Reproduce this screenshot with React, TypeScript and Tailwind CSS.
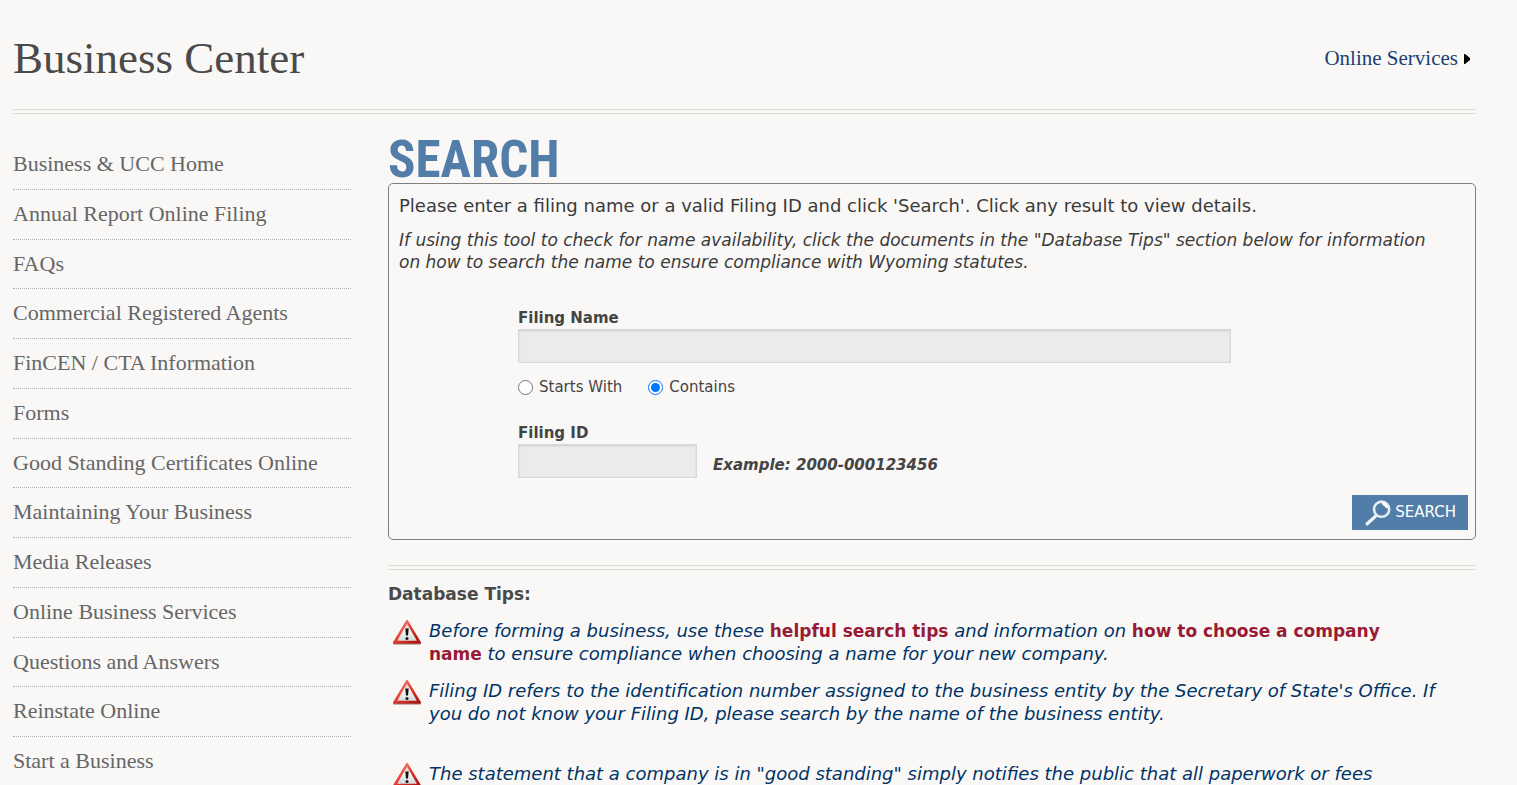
import { useState } from "react";

const menuItems = [
  "Business & UCC Home",
  "Annual Report Online Filing",
  "FAQs",
  "Commercial Registered Agents",
  "FinCEN / CTA Information",
  "Forms",
  "Good Standing Certificates Online",
  "Maintaining Your Business",
  "Media Releases",
  "Online Business Services",
  "Questions and Answers",
  "Reinstate Online",
  "Start a Business",
];

function WarningIcon() {
  return (
    <svg viewBox="0 0 30 26" className="h-[26px] w-[30px] shrink-0" aria-hidden="true">
      <defs>
        <linearGradient id="warnRed" x1="0" y1="0" x2="1" y2="1">
          <stop offset="0" stopColor="#f3a49c" />
          <stop offset="0.5" stopColor="#e2382c" />
          <stop offset="1" stopColor="#a80f0f" />
        </linearGradient>
        <linearGradient id="warnFace" x1="0" y1="0" x2="0" y2="1">
          <stop offset="0" stopColor="#f6b9b4" />
          <stop offset="0.4" stopColor="#f4f4f4" />
          <stop offset="1" stopColor="#d3dbdb" />
        </linearGradient>
      </defs>
      <path
        d="M15 1.6 28.2 23.8H1.8Z"
        fill="url(#warnRed)"
        stroke="url(#warnRed)"
        strokeWidth="1.8"
        strokeLinejoin="round"
      />
      <path d="M1.4 24.9H28.6" stroke="#8f4444" strokeWidth="1" />
      <path d="M15 4.6 24.8 21.8H5.2Z" fill="url(#warnFace)" />
      <path d="M13.3 9.4h3.4l-.7 7.2h-2Z" fill="#111" />
      <circle cx="15" cy="19.4" r="1.5" fill="#111" />
    </svg>
  );
}

function MagnifierIcon() {
  return (
    <svg viewBox="0 0 26 26" className="h-[26px] w-[26px]" fill="none" aria-hidden="true">
      <path d="M2.2 23.8 11.4 15.4" stroke="#f2f6fa" strokeWidth="3.2" strokeLinecap="round" />
      <circle cx="16.6" cy="9.2" r="7.6" stroke="#e4ecf3" strokeWidth="2.6" />
      <path d="M16.5 2.2c3.8.2 6.2 2.6 6.6 6-1.8.2-3-.6-3.4-2-1.4-.2-2.6-1.8-3.2-4Z" fill="#fff" />
    </svg>
  );
}

function Divider() {
  return <div className="h-[5px] border-y border-[#dddcd8]" />;
}

function Tip({ children }) {
  return (
    <li className="flex gap-[7px] pl-1 last:pt-[23px]">
      <WarningIcon />
      <p className="max-w-[1009px] text-[18px] leading-[23px] text-[#003366] italic">{children}</p>
    </li>
  );
}

function TipLink({ children }) {
  return (
    <a href="#" className="text-[17px] leading-none font-bold text-[#981b35] not-italic">
      {children}
    </a>
  );
}

const inputClass =
  "h-[34px] rounded-none border border-[#d8d8d6] bg-[#ebebeb] px-2 text-[15px] shadow-[inset_0_1px_2px_rgba(0,0,0,0.12)] outline-none";

function SearchForm() {
  const [name, setName] = useState("");
  const [filingId, setFilingId] = useState("");
  const [match, setMatch] = useState("contains");

  return (
    <form
      onSubmit={(event) => event.preventDefault()}
      className="rounded-[5px] border border-[#808080] pt-[11px] pr-[7px] pb-[9px] pl-[10px] text-[#3b3b3b]"
    >
      <p className="text-[18px] leading-[22px]">
        Please enter a filing name or a valid Filing ID and click 'Search'. Click any result to view
        details.
      </p>
      <p className="mt-3 max-w-[1040px] text-[17px] leading-[22px] italic">
        If using this tool to check for name availability, click the documents in the "Database
        Tips" section below for information on how to search the name to ensure compliance with
        Wyoming statutes.
      </p>

      <div className="mt-[35px] pl-[119px] text-[15px] leading-5 text-[#444]">
        <label htmlFor="filingName" className="block font-bold">
          Filing Name
        </label>
        <input
          id="filingName"
          type="text"
          value={name}
          onChange={(event) => setName(event.target.value)}
          className={`${inputClass} mt-px block w-3/4`}
        />
        <div className="mt-[14px] flex gap-[26px]">
          <label className="flex items-center gap-[6px]">
            <input
              type="radio"
              name="match"
              checked={match === "starts"}
              onChange={() => setMatch("starts")}
              className="size-[15px]"
            />
            Starts With
          </label>
          <label className="flex items-center gap-[6px]">
            <input
              type="radio"
              name="match"
              checked={match === "contains"}
              onChange={() => setMatch("contains")}
              className="size-[15px]"
            />
            Contains
          </label>
        </div>
        <label htmlFor="filingId" className="mt-[26px] block font-bold">
          Filing ID
        </label>
        <div className="mt-px flex items-center gap-4">
          <input
            id="filingId"
            type="text"
            value={filingId}
            onChange={(event) => setFilingId(event.target.value)}
            className={`${inputClass} w-[179px]`}
          />
          <span className="pt-2 font-bold italic">Example: 2000-000123456</span>
        </div>
      </div>

      <div className="mt-[17px] flex justify-end">
        <button
          type="submit"
          className="flex h-[35px] items-center gap-1 bg-[#527da8] pr-3 pl-[13px] text-[15px] text-white"
        >
          <MagnifierIcon />
          SEARCH
        </button>
      </div>
    </form>
  );
}

export default function App() {
  return (
    <div className="min-h-screen bg-[#f9f8f6] pr-[41px] pl-[13px] font-['Verdana','DejaVu_Sans',sans-serif]">
      <header className="flex h-[109px] items-center justify-between pt-[9px] pr-[6px] font-['Liberation_Serif',serif]">
        <h1 className="text-[45px] text-[#4a4a4a]">Business Center</h1>
        <a href="#" className="flex items-center gap-[6px] text-[21px] text-[#1c3f74]">
          Online Services
          <svg viewBox="0 0 6 10" className="h-[10px] w-[6px]" aria-hidden="true">
            <path d="M0 0H1L6 4V6L1 10H0Z" fill="#000" />
          </svg>
        </a>
      </header>
      <Divider />

      <div className="flex gap-[37px]">
        <nav className="w-[338px] shrink-0 pt-[26px] font-['Liberation_Serif',serif]">
          <ul>
            {menuItems.map((item) => (
              <li key={item} className="border-b border-dotted border-[#b0b0b0] py-3">
                <a href="#" className="block text-[22px] leading-[1.125] text-[#666]">
                  {item}
                </a>
              </li>
            ))}
          </ul>
        </nav>

        <main className="min-w-0 flex-1 pt-[23px]">
          <h2 className="font-['Arial_Narrow','Roboto_Condensed',sans-serif] text-[51px] leading-[46px] font-bold text-[#527da8]">
            SEARCH
          </h2>
          <SearchForm />
          <div className="mt-[25px]">
            <Divider />
          </div>
          <section className="mt-[13px]">
            <h3 className="text-[17px] leading-[23px] font-bold text-[#4a4a4a]">Database Tips:</h3>
            <ul className="mt-[13px] space-y-[14px]">
              <Tip>
                Before forming a business, use these <TipLink>helpful search tips</TipLink> and
                information on <TipLink>how to choose a company name</TipLink> to ensure compliance
                when choosing a name for your new company.
              </Tip>
              <Tip>
                Filing ID refers to the identification number assigned to the business entity by the
                Secretary of State's Office. If you do not know your Filing ID, please search by the
                name of the business entity.
              </Tip>
              <Tip>
                The statement that a company is in "good standing" simply notifies the public that
                all paperwork or fees
              </Tip>
            </ul>
          </section>
        </main>
      </div>
    </div>
  );
}
